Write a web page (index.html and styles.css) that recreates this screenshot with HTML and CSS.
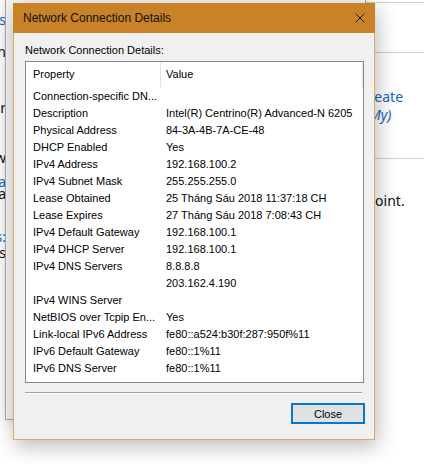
FILE: index.html
```html
<!DOCTYPE html>
<html>
<head>
<meta charset="utf-8">
<link rel="stylesheet" href="styles.css">
</head>
<body>
<div class="desktop">
  <div class="settings">
    <div class="settings-left">
      <div class="frag link l1">Networks</div>
      <div class="frag l2">Connection</div>
      <div class="frag l3">Adapter</div>
      <div class="frag l4">Overview</div>
      <div class="frag link l5">Data</div>
      <div class="frag l6">Media</div>
      <div class="frag link l7">Types:</div>
      <div class="frag l8">Hotspots</div>
    </div>
    <div class="settings-right">
      <div class="rule r1"></div>
      <div class="rule r2"></div>
      <div class="frag link frag-r">Create</div>
      <div class="frag link frag-r2">(My)</div>
      <div class="rule r3"></div>
      <div class="frag frag-r3">a point.</div>
    </div>
  </div>

  <div class="props"></div>

  <div class="dialog">
    <div class="titlebar">
      <span class="title">Network Connection Details</span>
      <svg class="close-x" width="10" height="10" viewBox="0 0 10 10">
        <path d="M0.5 0.5 L9.5 9.5 M9.5 0.5 L0.5 9.5" stroke="#1b1b1b" stroke-width="1" fill="none"/>
      </svg>
    </div>
    <div class="body">
      <div class="label">Network Connection Details:</div>
      <div class="listview">
        <div class="lv-head">
          <div class="hcell">Property</div>
          <div class="hcell">Value</div>
        </div>
        <div class="lv-row"><div class="cell">Connection-specific DN...</div><div class="cell"></div></div>
        <div class="lv-row"><div class="cell">Description</div><div class="cell">Intel(R) Centrino(R) Advanced-N 6205</div></div>
        <div class="lv-row"><div class="cell">Physical Address</div><div class="cell">84-3A-4B-7A-CE-48</div></div>
        <div class="lv-row"><div class="cell">DHCP Enabled</div><div class="cell">Yes</div></div>
        <div class="lv-row"><div class="cell">IPv4 Address</div><div class="cell">192.168.100.2</div></div>
        <div class="lv-row"><div class="cell">IPv4 Subnet Mask</div><div class="cell">255.255.255.0</div></div>
        <div class="lv-row"><div class="cell">Lease Obtained</div><div class="cell">25 Tháng Sáu 2018 11:37:18 CH</div></div>
        <div class="lv-row"><div class="cell">Lease Expires</div><div class="cell">27 Tháng Sáu 2018 7:08:43 CH</div></div>
        <div class="lv-row"><div class="cell">IPv4 Default Gateway</div><div class="cell">192.168.100.1</div></div>
        <div class="lv-row"><div class="cell">IPv4 DHCP Server</div><div class="cell">192.168.100.1</div></div>
        <div class="lv-row"><div class="cell">IPv4 DNS Servers</div><div class="cell">8.8.8.8</div></div>
        <div class="lv-row"><div class="cell"></div><div class="cell">203.162.4.190</div></div>
        <div class="lv-row"><div class="cell">IPv4 WINS Server</div><div class="cell"></div></div>
        <div class="lv-row"><div class="cell">NetBIOS over Tcpip En...</div><div class="cell">Yes</div></div>
        <div class="lv-row"><div class="cell">Link-local IPv6 Address</div><div class="cell">fe80::a524:b30f:287:950f%11</div></div>
        <div class="lv-row"><div class="cell">IPv6 Default Gateway</div><div class="cell">fe80::1%11</div></div>
        <div class="lv-row"><div class="cell">IPv6 DNS Server</div><div class="cell">fe80::1%11</div></div>
      </div>
      <div class="separator"></div>
      <div class="actions">
        <button class="btn">Close</button>
      </div>
    </div>
  </div>
</div>
</body>
</html>
```

FILE: styles.css
```css
html, body {
  margin: 0;
  padding: 0;
  background: #ffffff;
}

.desktop {
  position: relative;
  width: 424px;
  height: 464px;
  overflow: hidden;
  background: #ffffff;
  font-family: "Liberation Sans", Arial, sans-serif;
}

/* background settings window */
.settings {
  position: absolute;
  inset: 0;
  display: flex;
  background: #ffffff;
}

.settings-left {
  width: 120px;
  margin-left: -114px;
  display: flex;
  flex-direction: column;
  align-items: flex-end;
}

.settings-left .frag {
  line-height: 12px;
}

.l1 { margin-top: 14px; }
.l2 { margin-top: 20px; }
.l3 { margin-top: 44px; }
.l4 { margin-top: 38px; }
.l5 { margin-top: 12px; }
.l6 { margin-top: 0; }
.l7 { margin-top: 31px; }
.l8 { margin-top: 4px; }

.settings-right {
  position: absolute;
  left: 340px;
  top: 0;
  right: 0;
  display: flex;
  flex-direction: column;
}

.frag {
  font-family: "Noto Sans", sans-serif;
  font-size: 14px;
  line-height: 18px;
  color: #111;
  white-space: nowrap;
}

.frag.link {
  color: #1464c8;
}

.r1 { margin-top: 2px; }
.r2 { margin-top: 49px; }
.frag-r { margin-left: 20px; margin-top: 35px; }
.frag-r2 { margin-left: 25px; font-style: italic; }
.r3 { margin-top: 34px; }
.frag-r3 { margin-left: 15px; margin-top: 33px; }

.rule {
  height: 1px;
  background: #cfcfcf;
}

/* intermediate window */
.props {
  position: absolute;
  left: 5px;
  top: -20px;
  width: 361px;
  height: 440px;
  background: #f4f4f4;
  border: 1px solid #a9a9a9;
  box-sizing: border-box;
  box-shadow: 0 2px 10px rgba(0,0,0,0.12);
}

/* dialog */
.dialog {
  position: absolute;
  left: 13px;
  top: 3px;
  width: 362px;
  height: 437px;
  box-sizing: border-box;
  background: #f0f0f0;
  border: 1px solid #e2a95c;
  border-top: none;
  box-shadow: 2px 6px 20px rgba(0,0,0,0.28);
  display: flex;
  flex-direction: column;
}

.titlebar {
  height: 30px;
  margin: 0 -1px;
  background: #ca8228;
  display: flex;
  align-items: center;
  justify-content: space-between;
  padding: 0 10px 0 10px;
  flex-shrink: 0;
}

.title {
  font-size: 12px;
  color: #111;
  padding-bottom: 1px;
}

.close-x {
  display: block;
}

.body {
  display: flex;
  flex-direction: column;
  padding: 11px 9px 0 11px;
}

.label {
  font-size: 11px;
  line-height: 13px;
  color: #000;
  margin-bottom: 4px;
}

.listview {
  width: 339px;
  height: 322px;
  box-sizing: border-box;
  border: 1px solid #828790;
  background: #ffffff;
  font-size: 11px;
  color: #000;
}

.lv-head {
  display: grid;
  grid-template-columns: 135px 1fr;
  height: 26px;
}

.hcell {
  line-height: 25px;
  padding-left: 7px;
  border-right: 1px solid #e5e5e5;
}

.hcell + .hcell {
  padding-left: 5px;
}

.lv-row {
  display: grid;
  grid-template-columns: 135px 1fr;
  height: 17px;
  line-height: 17px;
}

.cell {
  padding-left: 7px;
  white-space: nowrap;
  overflow: hidden;
}

.cell + .cell {
  padding-left: 5px;
}

.separator {
  width: 337px;
  height: 1px;
  background: #a0a0a0;
  border-bottom: 1px solid #ffffff;
  margin-top: 9px;
}

.actions {
  display: flex;
  justify-content: flex-end;
  margin-top: 9px;
}

.btn {
  width: 74px;
  height: 21px;
  box-sizing: border-box;
  border: 2px solid #0078d7;
  background: #e1e1e1;
  font-family: "Liberation Sans", Arial, sans-serif;
  font-size: 11px;
  color: #000;
  padding: 0;
  margin: 0;
}
```
